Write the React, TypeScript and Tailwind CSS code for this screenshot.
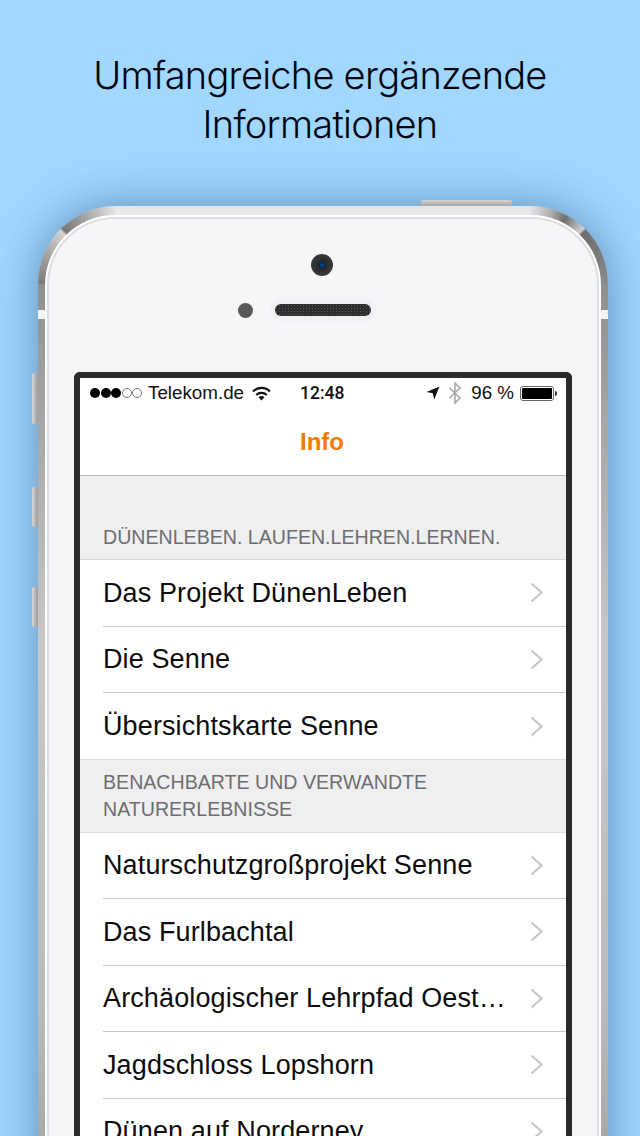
const topRows = ['Das Projekt DünenLeben', 'Die Senne', 'Übersichtskarte Senne']
const bottomRows = [
  'Naturschutzgroßprojekt Senne',
  'Das Furlbachtal',
  'Archäologischer Lehrpfad Oesterholz',
  'Jagdschloss Lopshorn',
  'Dünen auf Norderney',
]

function Chevron() {
  return (
    <svg className="w-[13px] h-[21px] shrink-0" viewBox="0 0 13 21" fill="none">
      <path d="M1.500 1.500l10 9-10 9" stroke="#c7c7cc" strokeWidth="2.2" />
    </svg>
  )
}

function Row({ label, last }: { label: string; last?: boolean }) {
  return (
    <div className="h-[66.5px] pl-[23px] bg-white">
      <div className={`h-full flex items-center pr-[23px] ${last ? '' : 'border-b border-[#c8c7cc]'}`}>
        <span className="w-[405px] truncate text-[27px] leading-[32px] tracking-[0.12px] text-[#0c0c0c]">{label}</span>
        <span className="flex-1" />
        <Chevron />
      </div>
    </div>
  )
}

function StatusBar() {
  return (
    <div className="h-[30px] flex items-center text-[18.800px] text-[#111]">
      <div className="w-[220px] pl-[10px] flex items-center">
        <span className="flex gap-[0.5px]">
          <i className="w-[10px] h-[10px] rounded-full bg-black" />
          <i className="w-[10px] h-[10px] rounded-full bg-black" />
          <i className="w-[10px] h-[10px] rounded-full bg-black" />
          <i className="w-[10px] h-[10px] rounded-full border border-[#777]" />
          <i className="w-[10px] h-[10px] rounded-full border border-[#777]" />
        </span>
        <span className="ml-[6px] w-[96px] whitespace-nowrap">Telekom.de</span>
        <svg className="ml-[8px] w-[19px] h-[15px]" viewBox="0 0 19 15" fill="none" stroke="#111" strokeWidth="2.2">
          <path d="M1 5.500a12 12 0 0 1 17 0" />
          <path d="M4.200 9a7.600 7.600 0 0 1 10.600 0" />
          <path d="M9.500 14.500L6.600 11.300a4 4 0 0 1 5.800 0z" fill="#111" stroke="none" />
        </svg>
      </div>
      <span className="font-['Roboto',sans-serif] font-medium text-[17.500px] whitespace-nowrap">12:48</span>
      <div className="flex-1 pr-[9px] flex items-center justify-end">
        <svg className="w-[14px] h-[14px]" viewBox="0 0 14 14" fill="#111">
          <path d="M13.500.5L8.200 13.500 6.800 7.200.5 6z" />
        </svg>
        <svg className="ml-[8px] w-[14px] h-[22px]" viewBox="0 0 14 22" fill="none" stroke="#a8a8a8" strokeWidth="1.6">
          <path d="M1.500 6l10.500 10-5 5V1l5 5L1.500 16" />
        </svg>
        <span className="ml-[9px] whitespace-nowrap">96 %</span>
        <div className="ml-[6px] w-[34px] h-[15px] border border-[#666] rounded-[3px] p-[1px]">
          <div className="h-full bg-black rounded-[1px]" />
        </div>
        <i className="ml-[1px] w-[2px] h-[5px] bg-[#333] rounded-r-sm" />
      </div>
    </div>
  )
}

function SectionLabel({ children }: { children: React.ReactNode }) {
  return <div className="text-[19.600px] leading-[27px] text-[#6d6d72] uppercase">{children}</div>
}

export default function App() {
  return (
    <div className="h-[1136px] overflow-hidden bg-[#a2d7ff] font-['Liberation_Sans',sans-serif]">
      <h1 className="pt-[51px] text-center text-[38px] leading-[49px] font-light text-[#000510] font-['Inter',sans-serif] tracking-[-0.75px]">
        Umfangreiche ergänzende
        <br />
        Informationen
      </h1>

      <div className="relative mt-[57px] ml-[38px] w-[570px] h-[1000px] rounded-t-[78px] p-[7px] pb-0 pt-[9px] shadow-[0_0_45px_rgba(40,80,120,0.55)] bg-[conic-gradient(from_270deg_at_100%_100%,#7c7c7c_0deg,#a8a8a8_25deg,#d4d4d4_44deg,#777_46deg,#b0b0b0_70deg,#e6e7e5_90deg),conic-gradient(from_0deg_at_0%_100%,#e6e7e5_0deg,#a8a8a8_18deg,#707070_28deg,#d0d0d0_44deg,#6e6e6e_46deg,#7c7c7c_70deg,#8c8c8c_90deg),linear-gradient(180deg,#e6e7e5_0,#eceded_12px,#8f8f8f_78px,#a4a4a4_200px,#c8c8c8_440px,#bbb_800px,#a0a0a0_1000px)] bg-[length:78px_78px,78px_78px,100%_100%] bg-[position:left_top,right_top,left_top] bg-no-repeat">
        {/* side buttons and antenna bands */}
        <div className="absolute left-[-6px] top-[167px] w-[6px] h-[51px] rounded-l-[2px] bg-[linear-gradient(90deg,#d8d8d8,#9a9a9a)]" />
        <div className="absolute left-[-6px] top-[281px] w-[6px] h-[40px] rounded-l-[2px] bg-[linear-gradient(90deg,#d8d8d8,#9a9a9a)]" />
        <div className="absolute left-[-6px] top-[381px] w-[6px] h-[40px] rounded-l-[2px] bg-[linear-gradient(90deg,#d8d8d8,#9a9a9a)]" />
        <div className="absolute left-[383px] top-[-6px] w-[91px] h-[6px] rounded-t-[2px] bg-[linear-gradient(180deg,#d4d4d4,#a8a8a8)]" />
        <div className="absolute left-0 top-[104px] w-[7px] h-[9px] bg-[#f1f2f3]" />
        <div className="absolute right-0 top-[104px] w-[7px] h-[9px] bg-[#f1f2f3]" />

        <div className="h-full rounded-t-[70px] bg-white pt-[2px] px-[2px]">
          <div className="h-full rounded-t-[68px] bg-[#dcdde0] pt-[2px] px-[2px]">
            <div className="h-full rounded-t-[66px] bg-[#f5f6f8] pt-[35px] pl-[25px]">
              <div className="ml-[237px] w-[22px] h-[22px] rounded-full bg-[radial-gradient(circle,#0a5cc0_0,#0a2a5a_14%,#2a2a2a_28%,#3a3a3a_70%,#5a5a5a_100%)]" />
              <div className="mt-[23px] flex items-center">
                <div className="ml-[164px] w-[15px] h-[15px] rounded-full bg-[#585858]" />
                <div className="ml-[17px] w-[106px] h-[22px] rounded-full bg-[#f0f1f4] flex items-center justify-center">
                  <div className="w-[96px] h-[12px] rounded-full bg-[radial-gradient(#555_1px,#2e2e2e_1px)] bg-[length:3px_3px]" />
                </div>
              </div>

              <div className="mt-[51px] w-[498px] h-[780px] border-[6px] border-b-0 border-[#2b2b2b] rounded-t-[6px] bg-white overflow-hidden">
                <StatusBar />
                <div className="h-[68px] border-b border-[#b2b2b2] flex items-center justify-center text-[24px] font-bold text-[#f47a00] pr-[2px]">
                  Info
                </div>
                <div className="h-[84px] pt-[48px] pl-[23px] bg-[#efeff0] border-b border-[#d8d8d8]">
                  <SectionLabel>Dünenleben. Laufen.Lehren.Lernen.</SectionLabel>
                </div>
                {topRows.map((label, i) => (
                  <Row key={label} label={label} last={i === topRows.length - 1} />
                ))}
                <div className="relative mt-[-1px] h-[74px] pt-[9px] pl-[23px] bg-[#efeff0] border-y border-[#dedede]">
                  <SectionLabel>Benachbarte und verwandte</SectionLabel>
                  <SectionLabel>Naturerlebnisse</SectionLabel>
                </div>
                {bottomRows.map((label) => (
                  <Row key={label} label={label} />
                ))}
              </div>
            </div>
          </div>
        </div>
      </div>
    </div>
  )
}
